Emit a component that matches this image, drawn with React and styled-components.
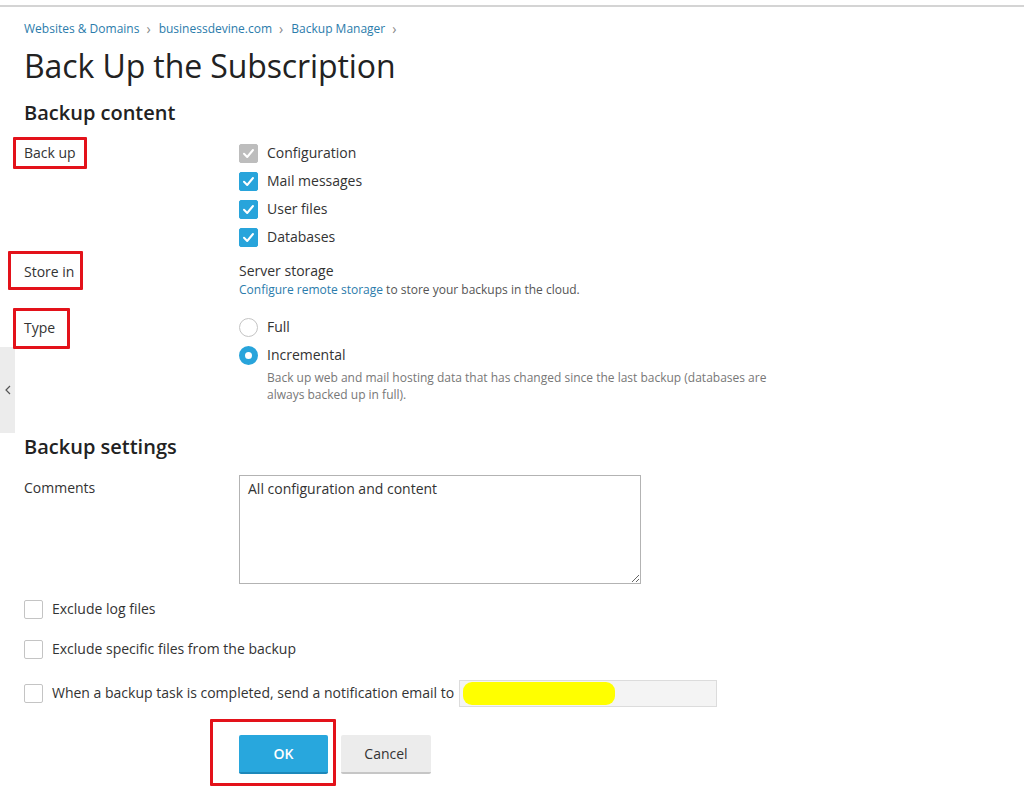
import React from "react";
import styled, { createGlobalStyle } from "styled-components";

const GlobalStyle = createGlobalStyle`
  html, body {
    margin: 0;
    padding: 0;
    background: #fff;
  }
  body {
    font-family: "Open Sans", "DejaVu Sans", sans-serif;
    font-size: 14px;
    color: #333;
  }
`;

function CheckIcon() {
  return (
    <svg width="13" height="13" viewBox="0 0 13 13">
      <polyline
        points="2,6.8 5.2,10 11,3"
        fill="none"
        stroke="#fff"
        strokeWidth="2"
        strokeLinecap="round"
        strokeLinejoin="round"
      />
    </svg>
  );
}

function App() {
  return (
    <Page>
      <GlobalStyle />
      <TopBar />
      <SideTab>
        <svg width="6" height="10" viewBox="0 0 6 10">
          <polyline points="5,1 1,5 5,9" fill="none" stroke="#555" strokeWidth="1.2" />
        </svg>
      </SideTab>

      <Content>
        {/* breadcrumbs */}
        <Breadcrumbs>
          <Crumb>Websites &amp; Domains</Crumb>
          <Sep>›</Sep>
          <Crumb>businessdevine.com</Crumb>
          <Sep>›</Sep>
          <Crumb>Backup Manager</Crumb>
          <Sep>›</Sep>
        </Breadcrumbs>

        <Title>Back Up the Subscription</Title>

        {/* backup content */}
        <SectionTitle>Backup content</SectionTitle>

        <FormRow $top={14}>
          <Label $mark={[6, 11, 6, 11]}>Back up</Label>
          <Field>
            {[
              ["Configuration", true],
              ["Mail messages", false],
              ["User files", false],
              ["Databases", false],
            ].map(([name, locked]) => (
              <OptionLine key={name}>
                <Box $checked $disabled={locked}>
                  <CheckIcon />
                </Box>
                {name}
              </OptionLine>
            ))}
          </Field>
        </FormRow>

        <FormRow $top={10}>
          <Label $labelTop={1} $mark={[11, 9, 8, 16]}>Store in</Label>
          <Field>
            <PlainLine>Server storage</PlainLine>
            <Hint>
              <Link>Configure remote storage</Link> to store your backups in the cloud.
            </Hint>
          </Field>
        </FormRow>

        <FormRow $top={14}>
          <Label $labelTop={5} $mark={[10, 15, 11, 11]}>Type</Label>
          <Field>
            <OptionLine>
              <Radio />
              Full
            </OptionLine>
            <OptionLine>
              <Radio $selected />
              Incremental
            </OptionLine>
            <Description>
              Back up web and mail hosting data that has changed since the last backup (databases are
              always backed up in full).
            </Description>
          </Field>
        </FormRow>

        {/* backup settings */}
        <SectionTitle $top={32}>Backup settings</SectionTitle>

        <FormRow $top={16}>
          <Label $labelTop={3}>Comments</Label>
          <Field>
            <Comments defaultValue="All configuration and content" />
          </Field>
        </FormRow>

        <CheckRow $top={11}>
          <Box />
          Exclude log files
        </CheckRow>
        <CheckRow $top={12}>
          <Box />
          Exclude specific files from the backup
        </CheckRow>
        <CheckRow $top={16}>
          <Box />
          When a backup task is completed, send a notification email to
          <EmailInput>
            <Scribble />
          </EmailInput>
        </CheckRow>

        <Buttons>
          <OkButton>OK</OkButton>
          <CancelButton>Cancel</CancelButton>
        </Buttons>
      </Content>
    </Page>
  );
}

export default App;

const Page = styled.div`
  position: relative;
  width: 1024px;
  min-height: 797px;
  overflow: hidden;
`;

const TopBar = styled.div`
  height: 5px;
  border-bottom: 2px solid #d4d4d4;
`;

const SideTab = styled.div`
  position: absolute;
  left: 0;
  top: 347px;
  width: 15px;
  height: 86px;
  background: #ececec;
  display: flex;
  align-items: center;
  justify-content: center;
`;

const Content = styled.div`
  padding-left: 24px;
`;

const Breadcrumbs = styled.div`
  margin-top: 14px;
  display: flex;
  align-items: center;
  font-size: 12px;
  line-height: 16px;
`;

const Crumb = styled.span`
  color: #2b7cab;
`;

const Sep = styled.span`
  color: #888;
  font-size: 14px;
  margin: 0 8px 0 7px;
`;

const Title = styled.h1`
  margin: 9px 0 0;
  font-size: 32px;
  line-height: 40px;
  font-weight: 400;
  letter-spacing: -0.1px;
  color: #222;
`;

const SectionTitle = styled.h2`
  margin: ${p => p.$top || 15}px 0 0;
  font-size: 20px;
  line-height: 24px;
  font-weight: 600;
  color: #222;
`;

const FormRow = styled.div`
  display: grid;
  grid-template-columns: 215px 1fr;
  margin-top: ${p => p.$top}px;
`;

const Label = styled.div`
  position: relative;
  justify-self: start;
  line-height: 20px;
  margin-top: ${p => (p.$labelTop === undefined ? 4 : p.$labelTop)}px;
  height: 20px;
  color: #333;

  ${p =>
    p.$mark &&
    `
    &::after {
      content: "";
      position: absolute;
      top: -${p.$mark[0]}px;
      right: -${p.$mark[1]}px;
      bottom: -${p.$mark[2]}px;
      left: -${p.$mark[3]}px;
      border: 3px solid #e3121a;
      border-radius: 1px;
    }
  `}
`;

const Field = styled.div`
  display: flex;
  flex-direction: column;
  align-items: flex-start;
`;

const OptionLine = styled.label`
  display: flex;
  align-items: center;
  gap: 9px;
  height: 28px;
  line-height: 20px;
  color: #333;
`;

const Box = styled.span`
  flex: none;
  width: 19px;
  height: 19px;
  box-sizing: border-box;
  border-radius: 2px;
  display: flex;
  align-items: center;
  justify-content: center;
  border: 1px solid
    ${p => (p.$checked ? (p.$disabled ? "#bdbdbd" : "#28a4db") : "#c4c4c4")};
  background: ${p => (p.$checked ? (p.$disabled ? "#bdbdbd" : "#28a4db") : "#fff")};
`;

const Radio = styled.span`
  flex: none;
  width: 19px;
  height: 19px;
  box-sizing: border-box;
  border-radius: 50%;
  background: #fff;
  border: ${p => (p.$selected ? "6px solid #28a4db" : "1px solid #c4c4c4")};
`;

const PlainLine = styled.div`
  line-height: 20px;
  color: #333;
`;

const Hint = styled.div`
  font-size: 12px;
  line-height: 18px;
  color: #555;
`;

const Link = styled.span`
  color: #2b7cab;
`;

const Description = styled.div`
  margin-left: 28px;
  max-width: 515px;
  font-size: 12px;
  line-height: 17px;
  color: #777;
`;

const Comments = styled.textarea`
  width: 402px;
  height: 109px;
  box-sizing: border-box;
  margin: 0;
  padding: 3px 8px;
  border: 1px solid #b3b3b3;
  border-radius: 0;
  font-family: "Open Sans", "DejaVu Sans", sans-serif;
  font-size: 14px;
  line-height: 20px;
  color: #333;
  resize: both;
  outline: none;
`;

const CheckRow = styled.label`
  display: flex;
  align-items: center;
  gap: 9px;
  min-height: 28px;
  margin-top: ${p => p.$top}px;
  line-height: 20px;
  color: #333;
`;

const EmailInput = styled.div`
  width: 258px;
  height: 27px;
  box-sizing: border-box;
  margin-left: -4px;
  padding: 1px 3px;
  border: 1px solid #dcdcdc;
  background: #f4f4f4;
  display: flex;
  align-items: center;
`;

const Scribble = styled.span`
  width: 152px;
  height: 23px;
  border-radius: 9px;
  background: #ffff00;
`;

const Buttons = styled.div`
  position: relative;
  display: flex;
  gap: 13px;
  margin: 28px 0 0 215px;
`;

const OkButton = styled.button`
  position: relative;
  width: 89px;
  height: 39px;
  border: 0;
  border-bottom: 2px solid #1d88ba;
  border-radius: 2px;
  background: #28a7dd;
  color: #fff;
  font-family: "Open Sans", "DejaVu Sans", sans-serif;
  font-size: 14px;
  font-weight: 600;

  &::after {
    content: "";
    position: absolute;
    top: -16px;
    left: -29px;
    right: -8px;
    bottom: -14px;
    border: 3px solid #e3121a;
    border-radius: 1px;
  }
`;

const CancelButton = styled.button`
  width: 90px;
  height: 39px;
  border: 0;
  border-bottom: 2px solid #c6c6c6;
  border-radius: 2px;
  background: #ececec;
  color: #333;
  font-family: "Open Sans", "DejaVu Sans", sans-serif;
  font-size: 14px;
`;
